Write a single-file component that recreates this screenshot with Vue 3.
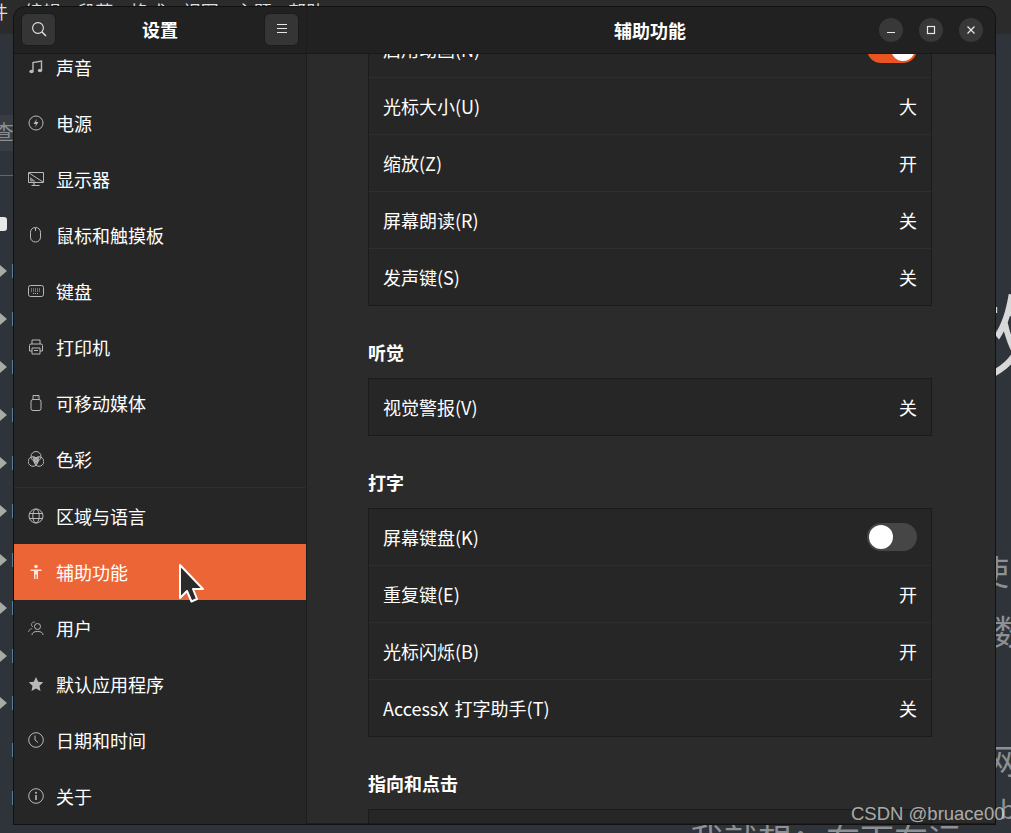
<script setup>
const navItems = [
  { label: '声音', icon: 'sound' },
  { label: '电源', icon: 'power' },
  { label: '显示器', icon: 'display' },
  { label: '鼠标和触摸板', icon: 'mouse' },
  { label: '键盘', icon: 'keyboard' },
  { label: '打印机', icon: 'printer' },
  { label: '可移动媒体', icon: 'usb' },
  { label: '色彩', icon: 'color', divider: true },
  { label: '区域与语言', icon: 'globe' },
  { label: '辅助功能', icon: 'access', active: true },
  { label: '用户', icon: 'users' },
  { label: '默认应用程序', icon: 'star' },
  { label: '日期和时间', icon: 'clock' },
  { label: '关于', icon: 'info' },
]

const sections = [
  {
    rows: [
      { label: '启用动画(N)', toggle: true, on: true },
      { label: '光标大小(U)', value: '大' },
      { label: '缩放(Z)', value: '开' },
      { label: '屏幕朗读(R)', value: '关' },
      { label: '发声键(S)', value: '关' },
    ],
  },
  { title: '听觉', rows: [{ label: '视觉警报(V)', value: '关' }] },
  {
    title: '打字',
    rows: [
      { label: '屏幕键盘(K)', toggle: true, on: false },
      { label: '重复键(E)', value: '开' },
      { label: '光标闪烁(B)', value: '开' },
      { label: 'AccessX 打字助手(T)', value: '关' },
    ],
  },
  { title: '指向和点击', rows: [{ label: '', value: '' }] },
]

const menu = ['件', '编辑', '段落', '格式', '视图', '主题', '帮助']
const arrows = [271, 319, 367, 415, 463, 511, 560, 608, 656, 703]
const ticks = [271, 319, 367, 415, 463, 511, 560, 608, 656, 703, 750, 798]
</script>

<template>
  <div class="desktop">
    <!-- editor window behind the settings dialog -->
    <div class="behind-menu">
      <span v-for="m in menu" :key="m">{{ m }}</span>
    </div>
    <div class="behind-search">查</div>
    <div class="behind-line"></div>
    <div class="behind-check"></div>
    <div v-for="y in arrows" :key="y" class="behind-arrow" :style="{ top: y - 6 + 'px' }"></div>
    <div v-for="y in ticks" :key="'t' + y" class="behind-tick" :style="{ top: y - 7 + 'px' }"></div>
    <div class="behind-big">效</div>
    <div class="behind-a">使</div>
    <div class="behind-b">数</div>
    <div class="behind-c">网</div>
    <div class="behind-d">b</div>
    <div class="behind-bottom">我就想：在下在运一</div>

    <div class="window">
      <div class="left">
        <header class="left-head">
          <button class="head-btn">
            <svg width="16" height="16" viewBox="0 0 16 16" fill="none" stroke="#e6e6e6" stroke-width="1.1">
              <circle cx="7" cy="7" r="5.4" />
              <path d="M11 11l4 4" stroke-width="1.5" />
            </svg>
          </button>
          <div class="head-title">设置</div>
          <button class="head-btn">
            <svg width="16" height="16" viewBox="0 0 16 16" fill="none" stroke="#e6e6e6" stroke-width="1">
              <path d="M3 3.5h10M3 7.5h10M3 11.5h10" />
            </svg>
          </button>
        </header>
        <nav class="nav">
          <div
            v-for="item in navItems"
            :key="item.label"
            class="nav-item"
            :class="{ active: item.active, divided: item.divider }"
          >
            <span class="nav-icon">
              <svg width="16" height="16" viewBox="0 0 16 16" fill="none" stroke="currentColor" stroke-width="1">
                <template v-if="item.icon === 'sound'">
                  <path d="M5 12V3.5l8.5-1.5V11" stroke-width="1.4" />
                  <ellipse cx="3.5" cy="12.5" rx="2.200" ry="1.800" fill="currentColor" stroke="none" />
                  <ellipse cx="12" cy="11.5" rx="2.200" ry="1.800" fill="currentColor" stroke="none" />
                </template>
                <template v-else-if="item.icon === 'power'">
                  <circle cx="8" cy="8" r="7" />
                  <path d="M9 3.5L5.500 9H8l-1 3.500L10.500 7H8z" fill="currentColor" stroke="none" />
                </template>
                <template v-else-if="item.icon === 'display'">
                  <path d="M.5 1.500h15v10H.5z" />
                  <path d="M1 2l14 9" />
                  <path d="M2 6l6 4.500H2z" fill="currentColor" stroke="none" opacity=".7" />
                  <path d="M6 12v2M3.500 14.500h8" stroke-width="1.200" />
                </template>
                <template v-else-if="item.icon === 'mouse'">
                  <rect x="2.500" y=".5" width="10" height="14.500" rx="4.800" />
                  <path d="M7.500 1v3" />
                </template>
                <template v-else-if="item.icon === 'keyboard'">
                  <rect x=".5" y="2.500" width="15" height="11" rx="2" />
                  <path d="M3 6h10M3 8h10M5 10.500h6" stroke-dasharray="1 1" />
                </template>
                <template v-else-if="item.icon === 'printer'">
                  <path d="M4 5V1h8v4" />
                  <path d="M4 12H1.500V6.500q0-1.500 1.500-1.500h10q1.500 0 1.500 1.500V12H12" />
                  <path d="M4 9h8v6H4zM6 11.500h4" />
                </template>
                <template v-else-if="item.icon === 'usb'">
                  <rect x="3" y="4.500" width="10" height="11" rx="2" />
                  <path d="M5 4.500V.5h6v4M7 2h.5M9 2h.5" />
                </template>
                <template v-else-if="item.icon === 'color'">
                  <circle cx="8" cy="5.500" r="5" />
                  <circle cx="5" cy="10.500" r="4.800" />
                  <circle cx="11" cy="10.500" r="4.800" />
                  <path d="M4.500 6h7l-1 5-2.500 3-2.500-3z" fill="currentColor" stroke="none" opacity=".8" />
                </template>
                <template v-else-if="item.icon === 'globe'">
                  <circle cx="8" cy="8" r="7" />
                  <ellipse cx="8" cy="8" rx="3.200" ry="7" />
                  <path d="M1 5.500h14M1 10.500h14" />
                </template>
                <template v-else-if="item.icon === 'access'">
                  <circle cx="8" cy="2.500" r="1.800" fill="currentColor" stroke="none" />
                  <path d="M2.500 5.500h11v1.500H10v8H8.600v-4.500H7.400V15H6V7H2.500z" fill="currentColor" stroke="none" />
                </template>
                <template v-else-if="item.icon === 'users'">
                  <circle cx="9.500" cy="6.500" r="3" />
                  <path d="M4 15q0-3.500 5.500-3.500t5.500 3.500" />
                  <path d="M7 2.200A2.600 2.600 0 0 0 3.500 5q.3 1.500 1.500 2M.5 12q.3-3 3.500-3.500" opacity=".7" />
                </template>
                <template v-else-if="item.icon === 'star'">
                  <path d="M8 1l2.200 4.700 5.100.6-3.800 3.500 1 5.100L8 12.400l-4.500 2.500 1-5.100L.7 6.300l5.100-.6z" fill="currentColor" stroke="none" />
                </template>
                <template v-else-if="item.icon === 'clock'">
                  <circle cx="8" cy="8" r="7.300" />
                  <path d="M7 3.500V8l3 2.500" />
                </template>
                <template v-else>
                  <circle cx="8" cy="8" r="7.300" />
                  <circle cx="8" cy="4.800" r="1" fill="currentColor" stroke="none" />
                  <path d="M8 7v5" stroke-width="1.600" />
                </template>
              </svg>
            </span>
            <span>{{ item.label }}</span>
          </div>
        </nav>
      </div>

      <div class="right">
        <header class="right-head">
          <div class="right-title">辅助功能</div>
          <div class="win-btns">
            <button class="win-btn">
              <svg width="12" height="12" viewBox="0 0 12 12" fill="none" stroke="#e8e8e8" stroke-width="1"><path d="M2 8.500h8" /></svg>
            </button>
            <button class="win-btn">
              <svg width="12" height="12" viewBox="0 0 12 12" fill="none" stroke="#e8e8e8" stroke-width="1.200"><rect x="2.500" y="2.500" width="7" height="7" /></svg>
            </button>
            <button class="win-btn">
              <svg width="12" height="12" viewBox="0 0 12 12" fill="none" stroke="#e8e8e8" stroke-width="1.200"><path d="M2.500 2.500l7 7M9.500 2.500l-7 7" /></svg>
            </button>
          </div>
        </header>
        <div class="content">
          <div class="scroller">
            <section v-for="(section, i) in sections" :key="i" class="section">
              <h3 v-if="section.title" class="section-title">{{ section.title }}</h3>
              <div class="panel">
                <div v-for="(row, j) in section.rows" :key="j" class="row">
                  <span>{{ row.label }}</span>
                  <span v-if="row.toggle" class="switch" :class="{ on: row.on }"><i class="knob"></i></span>
                  <span v-else>{{ row.value }}</span>
                </div>
              </div>
            </section>
          </div>
        </div>
      </div>
    </div>

    <svg class="cursor" width="30" height="44" viewBox="0 0 30 44">
      <path d="M2 2V35L9 28L13.500 38.500L19 36L15 26H25Z" fill="#2a2a2a" stroke="#fff" stroke-width="2" stroke-linejoin="round" />
    </svg>
    <div class="watermark">CSDN @bruace00</div>
  </div>
</template>

<style>
html,
body {
  margin: 0;
  background: #2f343a;
}
</style>

<style scoped>
.desktop {
  position: relative;
  width: 1011px;
  height: 833px;
  overflow: hidden;
  background: #2f343a;
  font-family: "Noto Sans CJK SC", "Noto Sans", sans-serif;
  color: #fff;
  padding: 7px 0 0 14px;
  box-sizing: border-box;
}

.desktop::before {
  content: "";
  position: absolute;
  left: 0;
  top: 0;
  width: 1011px;
  height: 34px;
  background: #2b2b2b;
}

.behind-menu {
  position: absolute;
  left: -10px;
  top: 0;
  display: flex;
  gap: 16.700px;
  font-size: 18px;
  line-height: 22px;
  color: #ddd;
  white-space: nowrap;
}

.behind-search {
  position: absolute;
  left: -6px;
  top: 115px;
  width: 20px;
  height: 36px;
  line-height: 34px;
  font-size: 20px;
  color: #8b8f94;
  background: #383d43;
}

.behind-line {
  position: absolute;
  left: 0;
  top: 175px;
  width: 14px;
  height: 1px;
  background: #666;
}

.behind-check {
  position: absolute;
  left: -6px;
  top: 217px;
  width: 13px;
  height: 14px;
  border-radius: 3px;
  background: #e8e8e8;
}

.behind-arrow {
  position: absolute;
  left: 0;
  width: 0;
  height: 0;
  border-left: 7px solid #a8aaa6;
  border-top: 6px solid transparent;
  border-bottom: 6px solid transparent;
}

.behind-tick {
  position: absolute;
  left: 12px;
  width: 1px;
  height: 14px;
  background: #4f7f9c;
}

.behind-big {
  position: absolute;
  left: 952px;
  top: 275px;
  font-size: 88px;
  line-height: 110px;
  color: #d8d8d8;
}

.behind-a,
.behind-b,
.behind-c,
.behind-d {
  position: absolute;
  font-size: 34px;
  line-height: 40px;
  color: #8d9094;
}

.behind-a {
  left: 975px;
  top: 551px;
}

.behind-b {
  left: 993px;
  top: 611px;
}

.behind-c {
  left: 985px;
  top: 740px;
}

.behind-d {
  left: 1000px;
  top: 788px;
  font-size: 26px;
}

.behind-bottom {
  position: absolute;
  left: 690px;
  top: 819px;
  font-size: 34px;
  line-height: 40px;
  color: #8d9094;
  white-space: nowrap;
}

.window {
  position: relative;
  display: flex;
  width: 981px;
  height: 817px;
  background: #2b2b2b;
  border-radius: 12px 12px 0 0;
  box-shadow: 0 0 0 1px #111;
  overflow: hidden;
}

.left {
  display: flex;
  flex-direction: column;
  width: 293px;
  flex-shrink: 0;
  background: #262626;
  border-right: 1px solid #1c1c1c;
  box-sizing: border-box;
}

.left-head,
.right-head {
  position: relative;
  z-index: 1;
  display: flex;
  align-items: center;
  flex-shrink: 0;
  height: 47px;
  background: #212121;
  border-bottom: 1px solid #191919;
  box-sizing: border-box;
}

.left-head {
  justify-content: space-between;
  padding: 0 7px 2px 7px;
}

.head-btn {
  display: flex;
  align-items: center;
  justify-content: center;
  width: 35px;
  height: 33px;
  padding: 0;
  background: #353535;
  border: 1px solid #1b1b1b;
  border-radius: 6px;
}

.head-title,
.right-title {
  font-size: 18px;
  font-weight: 700;
}

.nav {
  margin-top: -15px;
}

.nav-item {
  display: flex;
  align-items: center;
  height: 56px;
  padding-left: 14px;
  gap: 12px;
  font-size: 18px;
  box-sizing: border-box;
}

.nav-item.divided {
  height: 57px;
  border-bottom: 1px solid #2e2e2e;
}

.nav-item.active {
  background: #ec6536;
  color: #fff;
}

.nav-icon {
  display: flex;
  align-items: center;
  justify-content: center;
  width: 16px;
  height: 16px;
  color: #b9b9b9;
}

.active .nav-icon {
  color: #ffe3d9;
}

.right {
  flex: 1;
  display: flex;
  flex-direction: column;
  min-width: 0;
}

.right-head {
  justify-content: center;
  padding-right: 2px;
}

.win-btns {
  position: absolute;
  right: 12px;
  top: 11px;
  display: flex;
  gap: 16px;
}

.win-btn {
  display: flex;
  align-items: center;
  justify-content: center;
  width: 24px;
  height: 24px;
  padding: 0;
  border: 0;
  border-radius: 50%;
  background: #383838;
}

.content {
  flex: 1;
  overflow: hidden;
  border-bottom: 1px solid #1c1c1c;
}

.scroller {
  margin-top: -34px;
  padding: 0 63px 0 61px;
}

.section-title {
  margin: 0;
  height: 25px;
  font-size: 18px;
  line-height: 25px;
  font-weight: 700;
  padding-bottom: 13px;
}

.section {
  margin-bottom: 34px;
}

.panel {
  background: #262626;
  border: 1px solid #1b1b1b;
}

.row {
  display: flex;
  align-items: center;
  justify-content: space-between;
  height: 57px;
  padding: 0 14px;
  font-size: 18px;
  word-spacing: 2px;
  border-bottom: 1px solid #2e2e2e;
  box-sizing: border-box;
}

.row:last-child {
  height: 56px;
  border-bottom: 0;
}

.switch {
  display: flex;
  width: 50px;
  height: 28px;
  padding: 2px;
  box-sizing: border-box;
  border-radius: 14px;
  background: #464646;
}

.switch.on {
  justify-content: flex-end;
  background: #e95420;
}

.knob {
  display: block;
  width: 24px;
  height: 24px;
  border-radius: 50%;
  background: #fff;
}

.cursor {
  position: absolute;
  left: 178px;
  top: 563px;
}

.watermark {
  position: absolute;
  left: 851px;
  top: 801px;
  font-family: "Liberation Sans", sans-serif;
  font-size: 18.500px;
  line-height: 26px;
  color: rgba(255, 255, 255, 0.62);
  white-space: nowrap;
}
</style>
